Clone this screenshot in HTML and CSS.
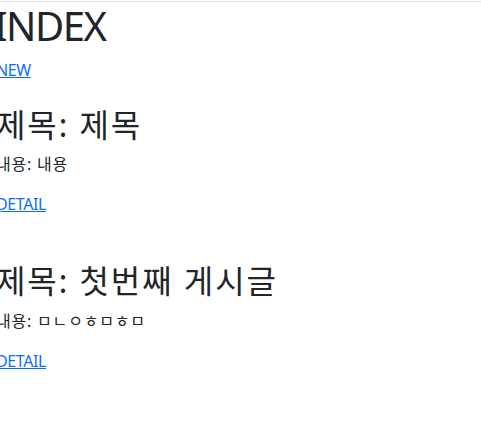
FILE: index.html
```html
<!DOCTYPE html>
<html lang="ko">
<head>
<meta charset="utf-8">
<title>INDEX</title>
<link rel="stylesheet" href="styles.css">
</head>
<body>
<div class="topline"></div>
<main class="page">
  <h1 class="title">INDEX</h1>
  <a class="link" href="#">NEW</a>
  <section class="post">
    <h2 class="post-title">제목: 제목</h2>
    <p class="post-body">내용: 내용</p>
    <a class="link" href="#">DETAIL</a>
  </section>
  <section class="post">
    <h2 class="post-title">제목: 첫번째 게시글</h2>
    <p class="post-body">내용: ㅁㄴㅇㅎㅁㅎㅁ</p>
    <a class="link" href="#">DETAIL</a>
  </section>
</main>
</body>
</html>
```
FILE: styles.css
```css
html, body {
  margin: 0;
  padding: 0;
  background: #fff;
}
body {
  font-family: "Noto Sans", "Noto Sans CJK KR", sans-serif;
  color: #212529;
  font-size: 16px;
  line-height: 1.5;
}
.topline {
  height: 1px;
  margin-top: 1px;
  background: #dee2e6;
}
.page {
  margin-left: -4px;
}
.title {
  font-size: 40px;
  font-weight: 400;
  line-height: 1.2;
  letter-spacing: -1.5px;
  margin: 0 0 8px -2px;
}
.link {
  color: #0d6efd;
  text-decoration: underline;
  letter-spacing: -0.4px;
}
.post {
  margin-top: 24px;
  margin-bottom: 46px;
}
.post-title {
  font-size: 32px;
  font-weight: 400;
  line-height: 1.2;
  letter-spacing: 0.06em;
  margin: 0 0 8px;
}
.post-body {
  letter-spacing: 0.05em;
  margin: 0 0 16px;
}
```
